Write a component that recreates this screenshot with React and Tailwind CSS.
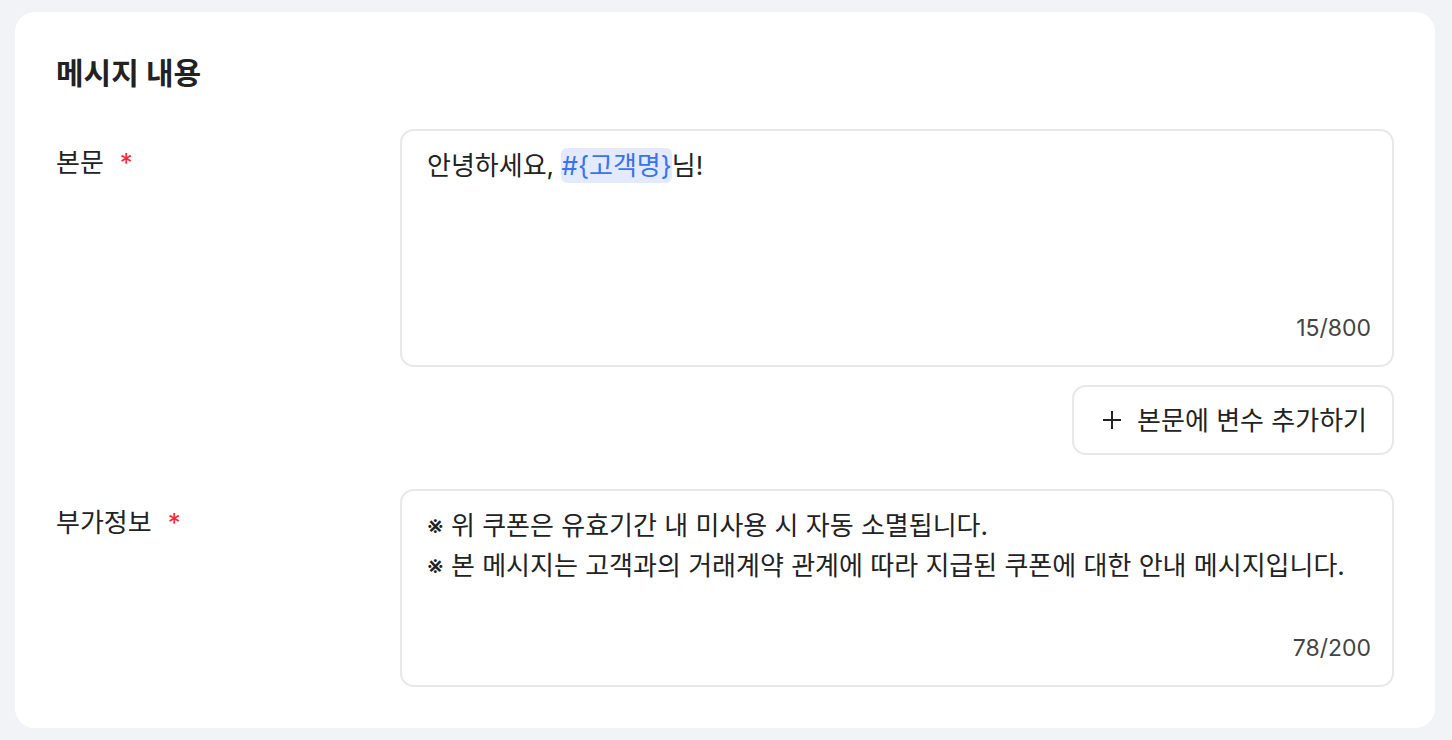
import React from 'react';

const font = { fontFamily: 'Inter, "Noto Sans CJK KR", "Noto Sans", sans-serif' };

const Label = ({ children }) => (
    <div className="w-[344px] shrink-0 pt-[16px] flex items-center h-[52px]">
        <span className="text-[26px] leading-[36px] font-normal text-[#222]">{children}</span>
        <span className="ml-[16px] text-[26px] leading-[36px] font-normal text-[#ff2a2a]">*</span>
    </div>
);

const App = () => {
    return (
        <div className="min-h-screen bg-[#f2f3f7] pt-[12px] pl-[15px] pb-[12px]" style={font}>
            <div className="w-[1420px] bg-white rounded-[20px] px-[41px] pt-[40px] pb-[41px]">
                <h2 className="h-[42px] flex items-center text-[30px] font-bold text-[#222]">메시지 내용</h2>

                {/* 본문 */}
                <div className="flex mt-[35px]">
                    <Label>본문</Label>
                    <div className="flex-1 flex flex-col items-end">
                        <div className="w-full h-[238px] border-2 border-[#e8e8eb] rounded-[14px] pl-[25px] pr-[21px] pt-[15px] pb-[21px] flex flex-col justify-between">
                            <p className="text-[26px] leading-[40px] text-[#222]">
                                안녕하세요, <span className="bg-[#e3eafd] text-[#3a72ef] rounded-[6px] py-[2px]">#{'{'}고객명{'}'}</span>님!
                            </p>
                            <p className="text-right text-[23px] leading-[32px] text-[#444]">15/800</p>
                        </div>
                        <button className="mt-[18px] h-[70px] pl-[28px] pr-[25px] border-2 border-[#e8e8eb] rounded-[14px] flex items-center gap-[15px] text-[26px] font-normal text-[#222]">
                            <svg width="20" height="20" viewBox="0 0 20 20" fill="none" stroke="#222" strokeWidth="2">
                                <path d="M10 1v18M1 10h18" />
                            </svg>
                            본문에 변수 추가하기
                        </button>
                    </div>
                </div>

                {/* 부가정보 */}
                <div className="flex mt-[34px]">
                    <Label>부가정보</Label>
                    <div className="flex-1 h-[198px] border-2 border-[#e8e8eb] rounded-[14px] pl-[25px] pr-[21px] pt-[15px] pb-[21px] flex flex-col justify-between">
                        <div className="text-[26px] leading-[40px] text-[#222]">
                            <p>※ 위 쿠폰은 유효기간 내 미사용 시 자동 소멸됩니다.</p>
                            <p>※ 본 메시지는 고객과의 거래계약 관계에 따라 지급된 쿠폰에 대한 안내 메시지입니다.</p>
                        </div>
                        <p className="text-right text-[23px] leading-[32px] text-[#444]">78/200</p>
                    </div>
                </div>
            </div>
        </div>
    );
};

export default App;
